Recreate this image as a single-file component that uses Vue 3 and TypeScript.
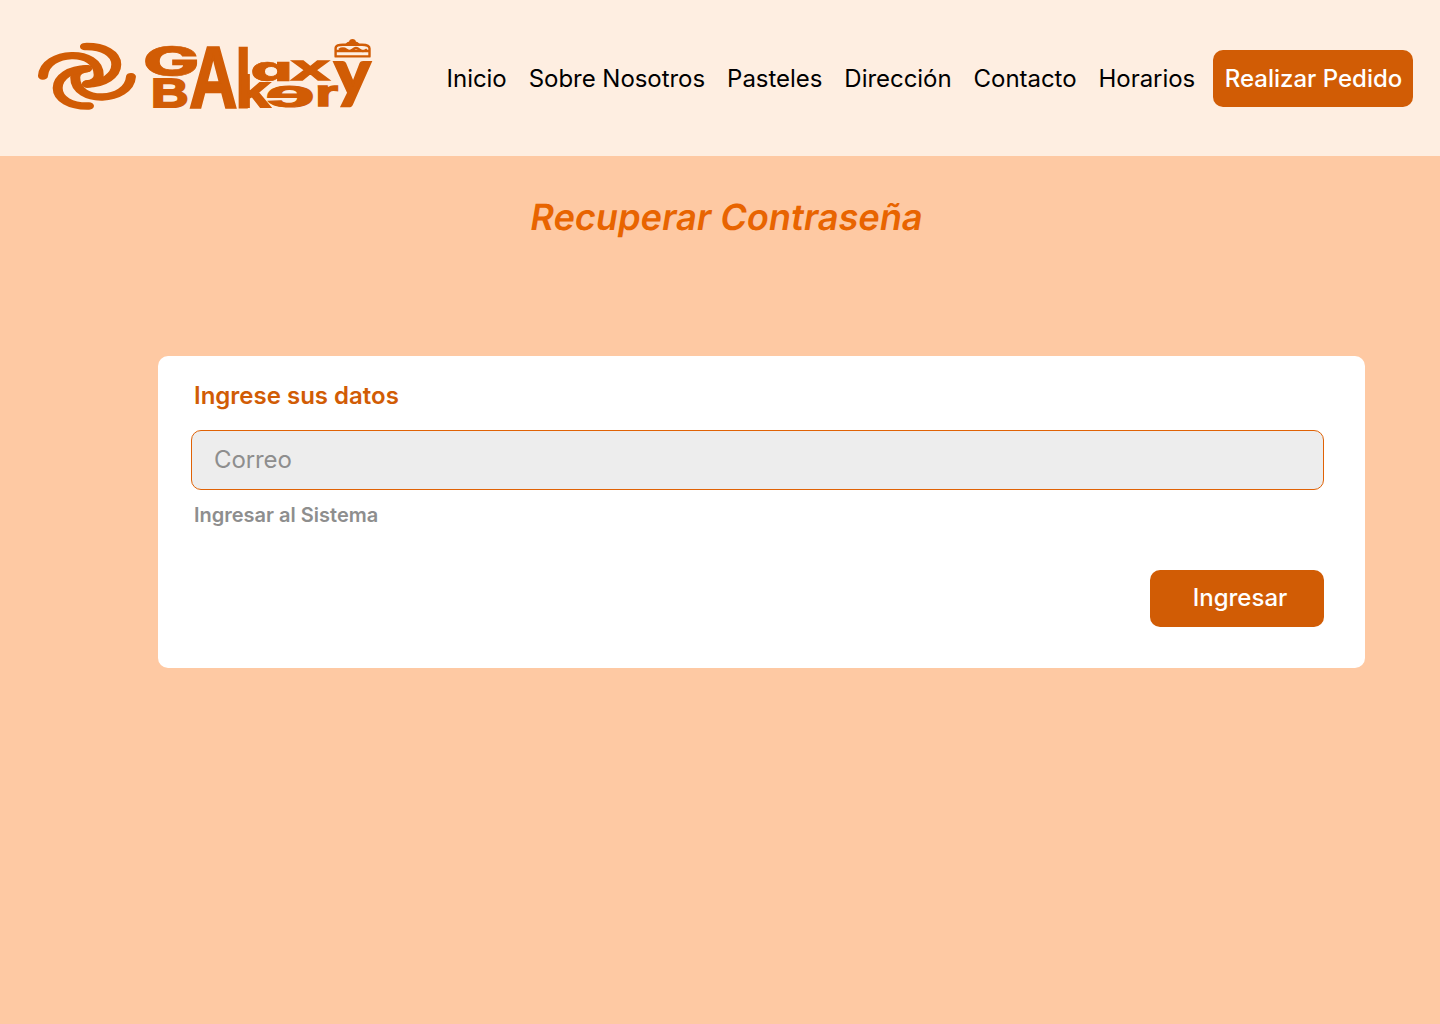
<script setup lang="ts">
import { ref } from 'vue'

interface Glyph {
  char: string
  x: number
  y: number
  sx: number
  sy: number
  face?: 'lato' | 'inter'
}

const glyphs: Glyph[] = [
  { char: 'G', x: 112.8, y: 45.6, sx: 0.757, sy: 0.405, face: 'inter' },
  { char: 'B', x: 121, y: 77.2, sx: 0.52, sy: 0.41 },
  { char: 'A', x: 159.2, y: 77.2, sx: 0.665, sy: 0.87 },
  { char: 'l', x: 205.7, y: 77.2, sx: 0.54, sy: 0.82 },
  { char: 'k', x: 205.9, y: 77.2, sx: 0.61, sy: 0.45 },
  { char: 'a', x: 220.4, y: 51.3, sx: 0.66, sy: 0.35, face: 'inter' },
  { char: 'x', x: 261.6, y: 50.4, sx: 0.68, sy: 0.35 },
  { char: 'e', x: 284.9, y: 76.8, sx: -0.89, sy: 0.38 },
  { char: 'r', x: 285.3, y: 76.4, sx: 0.58, sy: 0.36 },
  { char: 'y', x: 304.2, y: 64.6, sx: 0.68, sy: 0.65, face: 'lato' },
]

const links: string[] = ['Inicio', 'Sobre Nosotros', 'Pasteles', 'Dirección', 'Contacto', 'Horarios']
const correo = ref('')
</script>

<template>
  <div class="page">
    <header class="header">
      <svg class="logo" width="350" height="90" viewBox="0 0 350 90" role="img" aria-label="Galaxy Bakery">
        <g class="swirl" transform="scale(1.35 1)">
          <path d="M9.6 46C11 20 50.9 18 50.9 45C50.9 49.5 47.5 53.2 42.2 54" />
          <path d="M74.8 46.6C73.4 72.6 33.5 74.6 33.5 47.6C33.5 43.1 36.9 39.4 42.2 38.6" />
          <path d="M43.7 76C30 76.5 20.5 69 20.5 58S30 38.6 42.2 38.6" />
          <path d="M40.7 16.6C54.4 16.1 63.9 23.6 63.9 34.6S54.4 54 42.2 54" />
        </g>
        <text
          v-for="g in glyphs"
          :key="g.char"
          class="glyph"
          :class="g.face"
          :transform="`translate(${g.x} ${g.y}) scale(${g.sx} ${g.sy})`"
        >{{ g.char }}</text>
        <g class="cake">
          <path d="M305.6 26.4V18.5C305.6 15.5 309 14.7 313 14.7H332C336 14.7 339.5 15.5 339.5 18.5V26.4Z" />
          <path d="M306 21H339M309 19.7Q313 17.2 316.5 19.7T323 19.4T329.5 19.7T337 19.4" />
          <path d="M316.5 14.5Q317.5 12.8 320 12.4Q320.5 10.2 322.5 10.2Q324.5 10.2 325 12.4Q327.5 12.8 328.5 14.5Z" fill="#d15c05" />
        </g>
      </svg>
      <nav class="nav">
        <a v-for="link in links" :key="link" class="link">{{ link }}</a>
      </nav>
      <button class="btn order" type="button">Realizar Pedido</button>
    </header>
    <main class="main">
      <h1 class="title">Recuperar Contraseña</h1>
      <form class="card" @submit.prevent>
        <h2 class="subtitle">Ingrese sus datos</h2>
        <input v-model="correo" class="field" type="email" placeholder="Correo" />
        <a class="hint">Ingresar al Sistema</a>
        <button class="btn enter" type="submit">Ingresar</button>
      </form>
    </main>
  </div>
</template>

<style>
body {
  margin: 0;
}
</style>

<style scoped>
.page {
  min-height: 1024px;
  background: #fec9a3;
  font-family: Inter, sans-serif;
}
.header {
  box-sizing: border-box;
  height: 156px;
  padding: 30px 27px 0 30px;
  display: flex;
  align-items: flex-start;
  background: #feeee1;
}
.logo {
  flex: none;
  overflow: visible;
}
.swirl {
  fill: none;
  stroke: #d15c05;
  stroke-width: 7.4;
  stroke-linecap: round;
}
.glyph {
  font: bold 100px 'Liberation Sans', sans-serif;
  fill: #d15c05;
  stroke: #d15c05;
  stroke-width: 2.2px;
  vector-effect: non-scaling-stroke;
}
.lato {
  font: 900 100px Lato, sans-serif;
}
.inter {
  font: 800 100px Inter, sans-serif;
  font-feature-settings: 'cv11';
  stroke-width: 1px;
}
.cake {
  fill: none;
  stroke: #d15c05;
  stroke-width: 2.4;
  stroke-linejoin: round;
}
.nav {
  display: flex;
  gap: 22px;
  margin: 34px 0 0 66.6px;
}
.link {
  font-size: 24px;
  line-height: 29px;
  letter-spacing: -0.04px;
  color: #000;
  white-space: nowrap;
}
.btn {
  box-sizing: border-box;
  height: 57px;
  padding: 0;
  border: 0;
  border-radius: 10px;
  background: #d15c05;
  color: #fff;
  font: 500 24px/57px Inter, sans-serif;
}
.order {
  flex: none;
  width: 200px;
  margin: 20px 0 0 auto;
  padding-left: 1px;
}
.main {
  display: flex;
  flex-direction: column;
}
.title {
  align-self: flex-start;
  margin: 39px 0 0 531px;
  font-size: 36px;
  line-height: 44px;
  font-weight: 600;
  letter-spacing: 0.08px;
  color: #e86400;
  transform: skewX(-9.4deg);
}
.card {
  box-sizing: border-box;
  width: 1207px;
  height: 312px;
  margin: 117px 0 0 158px;
  padding: 25px 41px 0 33px;
  display: flex;
  flex-direction: column;
  align-items: flex-start;
  border-radius: 10px;
  background: #fff;
}
.subtitle {
  margin: 0 0 20px 3px;
  font-size: 24px;
  line-height: 29px;
  font-weight: 600;
  color: #d15c05;
}
.field {
  box-sizing: border-box;
  width: 100%;
  height: 60px;
  padding: 0 22px 2px;
  border: 1px solid #e06205;
  border-radius: 10px;
  background: #ededed;
  font: 24px Inter, sans-serif;
  letter-spacing: -0.1px;
  color: #000;
  outline: none;
}
.field::placeholder {
  color: #8e8e8e;
  opacity: 1;
}
.hint {
  margin: 13px 0 0 3px;
  font-size: 20px;
  line-height: 24px;
  font-weight: 600;
  color: #8e8e8e;
}
.enter {
  width: 174px;
  margin-top: 43px;
  padding: 0 0 2px 6px;
  line-height: 55px;
  align-self: flex-end;
}
</style>
